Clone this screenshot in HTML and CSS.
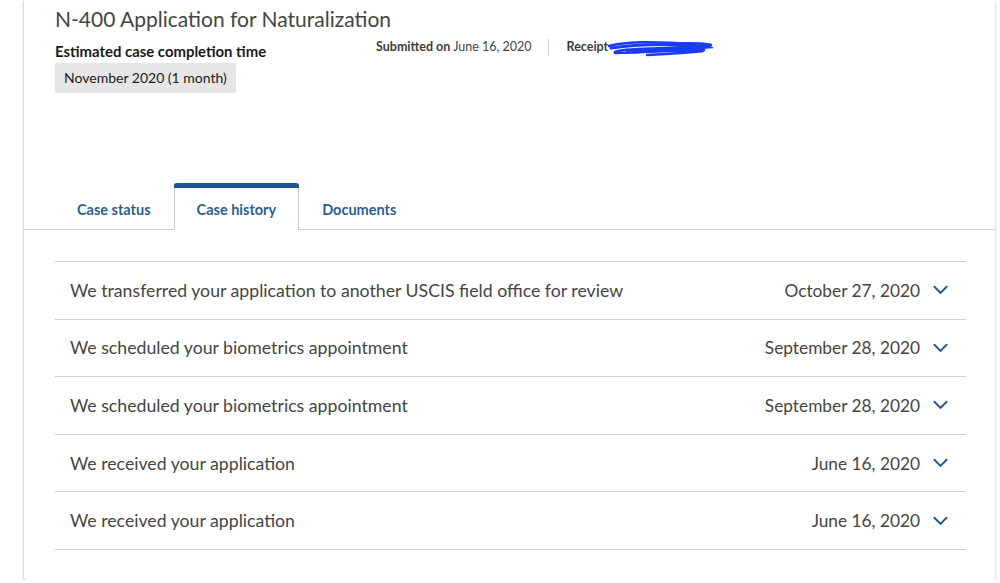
FILE: index.html
```html
<!DOCTYPE html>
<html lang="en">
<head>
<meta charset="utf-8">
<title>N-400 Application for Naturalization</title>
<link rel="stylesheet" href="styles.css">
</head>
<body>
<div class="page">
  <div class="card">
    <div class="header">
      <h1 class="title">N-400 Application for Naturalization</h1>
      <div class="info-row">
        <div class="estimate">
          <div class="estimate-label">Estimated case completion time</div>
          <div class="badge">November 2020 (1 month)</div>
        </div>
        <div class="meta">
          <span class="meta-item"><b>Submitted on</b> June 16, 2020</span>
          <span class="meta-divider"></span>
          <span class="meta-item receipt"><b>Receipt</b>
            <svg class="scribble" viewBox="0 0 106 18" aria-hidden="true">
              <path d="M2 7 C20 2, 45 3, 70 4 C85 4, 98 4, 104 6 C90 8, 60 9, 30 10 C15 11, 6 12, 8 14 C30 14, 60 12, 85 11 C95 10, 100 10, 96 12 C80 14, 60 15, 40 16" fill="none" stroke="#1a3cf5" stroke-width="2.4" stroke-linecap="round" stroke-linejoin="round"/>
              <path d="M4 9 C25 6, 55 5, 80 6 C92 7, 100 7, 102 8 C80 10, 50 11, 20 12" fill="none" stroke="#1a3cf5" stroke-width="3" stroke-linecap="round"/>
            </svg>
          </span>
        </div>
      </div>
    </div>
    <nav class="tabs">
      <a class="tab">Case status</a>
      <a class="tab active">Case history</a>
      <a class="tab">Documents</a>
    </nav>
    <ul class="history">
      <li class="row"><span class="event">We transferred your application to another USCIS field office for review</span><span class="date">October 27, 2020</span><svg class="chev" viewBox="0 0 16 10"><path d="M1.5 1.5 L8 8 L14.5 1.5"/></svg></li>
      <li class="row"><span class="event">We scheduled your biometrics appointment</span><span class="date">September 28, 2020</span><svg class="chev" viewBox="0 0 16 10"><path d="M1.5 1.5 L8 8 L14.5 1.5"/></svg></li>
      <li class="row"><span class="event">We scheduled your biometrics appointment</span><span class="date">September 28, 2020</span><svg class="chev" viewBox="0 0 16 10"><path d="M1.5 1.5 L8 8 L14.5 1.5"/></svg></li>
      <li class="row"><span class="event">We received your application</span><span class="date">June 16, 2020</span><svg class="chev" viewBox="0 0 16 10"><path d="M1.5 1.5 L8 8 L14.5 1.5"/></svg></li>
      <li class="row"><span class="event">We received your application</span><span class="date">June 16, 2020</span><svg class="chev" viewBox="0 0 16 10"><path d="M1.5 1.5 L8 8 L14.5 1.5"/></svg></li>
    </ul>
  </div>
</div>
</body>
</html>
```
FILE: styles.css
```css
* { box-sizing: border-box; }
html, body { margin: 0; padding: 0; background: #ffffff; }
body {
  font-family: "Lato", "Liberation Sans", sans-serif;
  color: #454545;
}
.page {
  padding: 0 5px 0 24px;
}
.card {
  background: #fff;
  border-radius: 0 0 3px 3px;
  box-shadow: 0 1px 3px rgba(0,0,0,0.28), -1px 0 2px rgba(0,0,0,0.06);
  padding-bottom: 30px;
}
.header {
  padding: 5px 30px 0 31px;
  height: 183px;
}
.title {
  margin: 0;
  font-size: 21px;
  line-height: 28px;
  font-weight: 400;
  color: #454545;
}
.info-row {
  display: flex;
  align-items: flex-start;
  margin-top: 5px;
}
.estimate {
  width: 321px;
  padding-top: 4px;
}
.estimate-label {
  font-size: 14.9px;
  line-height: 18px;
  font-weight: 700;
  color: #1b1b1b;
}
.badge {
  display: inline-block;
  margin-top: 3px;
  background: #e6e6e6;
  border-radius: 2px;
  padding: 0 9px;
  font-size: 14px;
  line-height: 30px;
  color: #1b1b1b;
}
.meta {
  display: flex;
  align-items: center;
  font-size: 12.5px;
  line-height: 18px;
  color: #454545;
}
.meta b { font-weight: 700; color: #3d3d3d; }
.meta-divider {
  width: 1px;
  height: 17px;
  background: #d0d0d0;
  margin: 0 17px 0 16px;
}
.receipt {
  position: relative;
  display: inline-block;
  width: 150px;
  padding-left: 1px;
}
.scribble {
  position: absolute;
  left: 41px;
  top: 1px;
  width: 106px;
  height: 18px;
}
.tabs {
  display: flex;
  padding-left: 30px;
  border-bottom: 1px solid #cfcfcf;
  height: 47px;
}
.tab {
  display: block;
  padding: 5px 23px 0;
  font-size: 14.5px;
  font-weight: 700;
  color: #2a5f91;
  line-height: 43px;
  height: 47px;
}
.tab.active {
  position: relative;
  background: #fff;
  border-left: 1px solid #cfcfcf;
  border-right: 1px solid #cfcfcf;
  padding: 5px 22px 0;
  height: 47px;
  margin-bottom: -1px;
}
.tab.active::before {
  content: "";
  position: absolute;
  left: -1px;
  right: -1px;
  top: 0;
  height: 5px;
  background: #205493;
  border-radius: 3px 3px 0 0;
}
.history {
  list-style: none;
  margin: 31px 29px 0 31px;
  padding: 0;
  border-bottom: 1px solid #cfcfcf;
}
.row {
  display: flex;
  align-items: center;
  height: 57.6px;
  border-top: 1px solid #cfcfcf;
  padding: 0 18px 0 15px;
  font-size: 17px;
}
.event { flex: 1; font-size: 17.7px; }
.date { color: #454545; font-size: 17.3px; }
.chev {
  width: 15px;
  height: 10px;
  margin-left: 13px;
  fill: none;
  stroke: #205493;
  stroke-width: 2;
  stroke-linecap: round;
}
```
